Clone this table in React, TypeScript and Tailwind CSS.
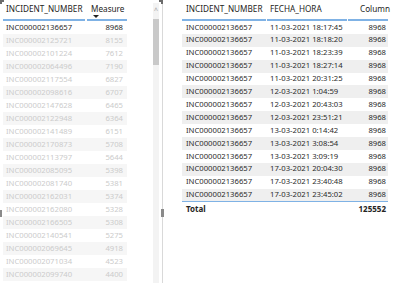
const leftRows: [string, string][] = [
  ['INC000002136657', '8968'],
  ['INC000002125721', '8155'],
  ['INC000002101224', '7612'],
  ['INC000002064496', '7190'],
  ['INC000002117554', '6827'],
  ['INC000002098616', '6707'],
  ['INC000002147628', '6465'],
  ['INC000002122948', '6364'],
  ['INC000002141489', '6151'],
  ['INC000002170873', '5708'],
  ['INC000002113797', '5644'],
  ['INC000002085095', '5398'],
  ['INC000002081740', '5381'],
  ['INC000002162031', '5374'],
  ['INC000002162080', '5328'],
  ['INC000002166505', '5308'],
  ['INC000002140541', '5275'],
  ['INC000002069645', '4918'],
  ['INC000002071034', '4523'],
  ['INC000002099740', '4400'],
];

const times = [
  '11-03-2021 18:17:45',
  '11-03-2021 18:18:20',
  '11-03-2021 18:23:39',
  '11-03-2021 18:27:14',
  '11-03-2021 20:31:25',
  '12-03-2021 1:04:59',
  '12-03-2021 20:43:03',
  '12-03-2021 23:51:21',
  '13-03-2021 0:14:42',
  '13-03-2021 3:08:54',
  '13-03-2021 3:09:19',
  '17-03-2021 20:04:30',
  '17-03-2021 23:40:48',
  '17-03-2021 23:45:02',
];

function LeftTable() {
  return (
    <div className="relative flex h-full w-[163px] border-r border-[#d9d9d9]">
      {/* selection corner */}
      <div className="absolute top-0 right-[-1px] h-[4px] w-[4px] border-t-2 border-r-2 border-[#6b6b6b]" />
      <div className="absolute top-[209px] right-[-2px] h-[8px] w-[3px] bg-[#8a8a8a]" />

      <div className="ml-[3px] flex w-[124px] flex-col">
        <div className="flex h-[21px] gap-[2px] text-[8.2px] text-[#252423]">
          <div className="flex w-[82px] items-center border-b-2 border-[#7fb2e5] pl-[3px]">
            INCIDENT_NUMBER
          </div>
          <div className="relative flex flex-1 items-center border-b-2 border-[#7fb2e5] pl-[4px]">
            Measure
            <div className="absolute left-[6px] top-[15px] h-0 w-0 border-x-[3px] border-t-[3px] border-x-transparent border-t-[#222]" />
          </div>
        </div>
        {leftRows.map(([id, v], i) => (
          <div
            key={id}
            className={`flex h-[13px] items-center ${i % 2 === 1 ? 'bg-[#f6f6f6]' : ''} ${i === 0 ? 'text-[#2b2b2b]' : 'text-[#cbcbcb]'}`}
          >
            <div className="w-[84px] pl-[3px]">{id}</div>
            <div className="flex-1 pr-[4px] text-right">{v}</div>
          </div>
        ))}
      </div>

      <div className="ml-auto mr-[3px] mt-[3px] flex w-[6px] flex-col items-center bg-[#f3f3f3]">
        <div className="mt-[3px] h-[10px] text-[7px] leading-[10px] text-[#9a9a9a]">^</div>
        <div className="mt-[3px] h-[46px] w-full bg-[#c9c9c9]" />
      </div>
    </div>
  );
}

function RightTable() {
  return (
    <div className="ml-[19px] flex w-[206px] flex-col">
      <div className="flex h-[21px] gap-[1px] text-[8.2px] text-[#252423]">
        <div className="flex w-[84px] items-center border-b-2 border-[#7fb2e5] pl-[4px]">
          INCIDENT_NUMBER
        </div>
        <div className="flex w-[80px] items-center border-b-2 border-[#7fb2e5] pl-[3px]">
          FECHA_HORA
        </div>
        <div className="flex flex-1 items-center justify-end border-b-2 border-[#7fb2e5]">
          <span className="-mr-[2px]">Column</span>
        </div>
      </div>
      {times.map((t, i) => (
        <div
          key={t}
          className={`flex h-[12.9px] items-center text-[#2b2b2b] ${i % 2 === 1 ? 'bg-[#efefef]' : ''}`}
        >
          <div className="w-[85px] pl-[4px]">INC000002136657</div>
          <div className="w-[80px] pl-[3px]">{t}</div>
          <div className="flex-1 pr-[2px] text-right">8968</div>
        </div>
      ))}
      <div className="flex h-[14px] items-center border-t border-[#7fb2e5] text-[8px] font-bold text-[#252423]">
        <div className="pl-[4px]">Total</div>
        <div className="ml-auto pr-[2px]">125552</div>
      </div>
    </div>
  );
}

export default function App() {
  return (
    <div className="relative flex h-[283px] w-[400px] overflow-hidden whitespace-nowrap bg-white font-['Noto_Sans',sans-serif] text-[7.7px] leading-none">
      <div className="absolute left-0 top-0 h-[4px] w-[4px] border-l-2 border-t-2 border-[#6b6b6b]" />
      <div className="absolute left-0 top-[210px] h-[7px] w-[2px] bg-[#8a8a8a]" />
      <LeftTable />
      <RightTable />
    </div>
  );
}
